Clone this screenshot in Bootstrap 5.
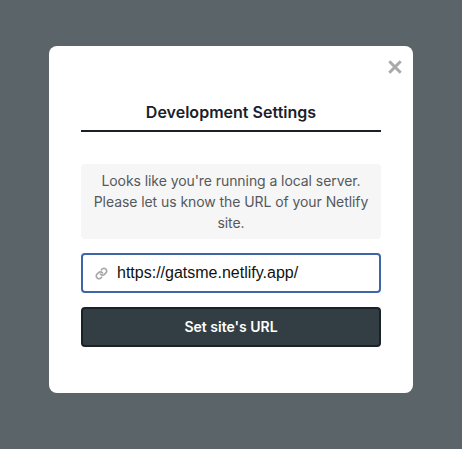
<!doctype html>
<html lang="en">
<head>
<meta charset="utf-8">
<title>Development Settings</title>
<link href="https://cdn.jsdelivr.net/npm/bootstrap@5.3.0/dist/css/bootstrap.min.css" rel="stylesheet">
<style>
html, body { height: 100%; }
body { background: #5b6569; font-family: Inter, "Liberation Sans", sans-serif; overflow: hidden; }
.backdrop-page { height: 449px; padding-bottom: 10px; }
.dialog-box { width: 364px; height: 347px; border-radius: 8px; padding: 0 32px; background: #fff; position: relative; }
.close-x { position: absolute; top: 14px; right: 11px; width: 14px; height: 14px; padding: 0; border: 0; background: none; line-height: 0; }
.dialog-title { margin: 56px 0 0; padding-bottom: 7px; font-size: 16px; line-height: 21px; font-weight: 600; letter-spacing: .02px; color: #18212a; border-bottom: 2px solid #18212a; box-sizing: content-box; height: 21px; text-align: center; }
.info-note { margin: 32px 0 0; height: 75px; padding: 6px 8px; border-radius: 4px; background: #f6f6f6; color: #55595c; font-size: 14px; line-height: 21px; letter-spacing: -.07px; text-align: center; }
.url-field { margin-top: 14px; height: 40px; border: 2px solid #3f64a8; border-radius: 4px; padding-left: 12px; gap: 9px; }
.url-field input { border: 0; outline: 0; padding: 0; min-width: 0; flex: 1; font-family: "Liberation Sans", Arial, sans-serif; font-size: 16px; color: #111; background: transparent; }
.submit-url { margin-top: 14px; width: 100%; height: 40px; padding: 0 0 2px; border: 2px solid #182229; border-radius: 4px; background: #333e44; color: #fff; font-size: 14px; font-weight: 600; }
.submit-url:hover { background: #333e44; color: #fff; border-color: #182229; }
</style>
</head>
<body>
<div class="backdrop-page d-flex align-items-center justify-content-center">
  <div class="dialog-box">
    <button class="close-x" type="button" aria-label="Close">
      <svg width="14" height="14" viewBox="0 0 14 14"><path d="M1.3 1.3 12.7 12.7M12.7 1.3 1.3 12.7" stroke="#a9a9a9" stroke-width="3" fill="none"/></svg>
    </button>
    <h1 class="dialog-title">Development Settings</h1>
    <p class="info-note">Looks like you're running a local server. Please let us know the URL of your Netlify site.</p>
    <div class="url-field d-flex align-items-center">
      <svg width="13" height="13" viewBox="0 0 24 24" fill="none" stroke="#a8a8a8" stroke-width="3" stroke-linecap="round" stroke-linejoin="round"><path d="M10 13a5 5 0 0 0 7.5.5l3-3a5 5 0 0 0-7-7l-1.7 1.7"/><path d="M14 11a5 5 0 0 0-7.5-.5l-3 3a5 5 0 0 0 7 7l1.7-1.7"/></svg>
      <input type="text" value="https://gatsme.netlify.app/" aria-label="Site URL">
    </div>
    <button class="btn submit-url" type="button">Set site's URL</button>
  </div>
</div>
<script src="https://cdn.jsdelivr.net/npm/bootstrap@5.3.0/dist/js/bootstrap.bundle.min.js"></script>
</body>
</html>
